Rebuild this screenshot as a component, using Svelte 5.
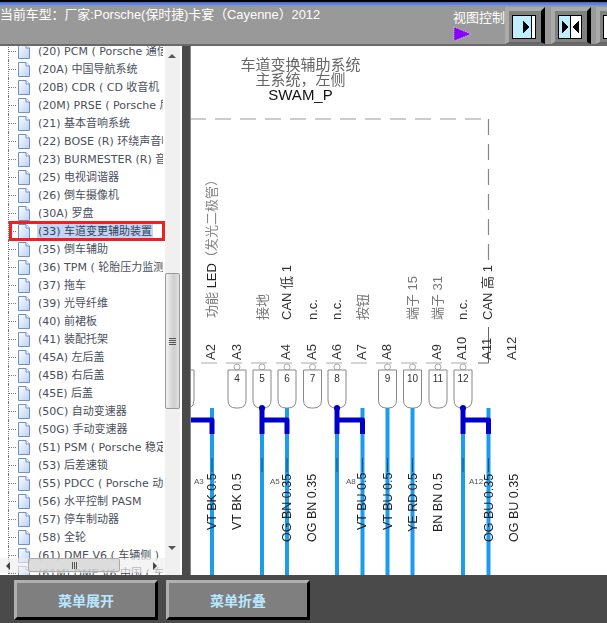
<script>
  const rows = [
    ['(20) PCM ( Porsche 通信管理系统 )'], ['(20A) 中国导航系统'], ['(20B) CDR ( CD 收音机 )'], ['(20M) PRSE ( Porsche 后座娱乐 )'],
    ['(21) 基本音响系统'], ['(22) BOSE (R) 环绕声音响系统'], ['(23) BURMESTER (R) 音响系统'], ['(25) 电视调谐器'],
    ['(26) 倒车摄像机'], ['(30A) 罗盘'], ['(33) 车道变更辅助装置', true], ['(35) 倒车辅助'],
    ['(36) TPM ( 轮胎压力监测 )'], ['(37) 拖车'], ['(39) 光导纤维'], ['(40) 前裙板'], ['(41) 装配托架'],
    ['(45A) 左后盖'], ['(45B) 右后盖'], ['(45E) 后盖'], ['(50C) 自动变速器'], ['(50G) 手动变速器'],
    ['(51) PSM ( Porsche 稳定管理 )'], ['(53) 后差速锁'], ['(55) PDCC ( Porsche 动态底盘 )'], ['(56) 水平控制 PASM'],
    ['(57) 停车制动器'], ['(58) 全轮'], ['(61) DME V6 ( 车辆侧 )'], ['(61M) DME V6 中国 ( 车辆侧 )']
  ];
  const pins = [
    { n: 4, x: 238 }, { n: 5, x: 263 }, { n: 6, x: 288 }, { n: 7, x: 313.5 }, { n: 8, x: 338 },
    { n: 9, x: 388.5 }, { n: 10, x: 413.5 }, { n: 11, x: 439 }, { n: 12, x: 464 }
  ];
  const pinLabels = [
    ['A2', 216], ['A3', 241.5], ['A4', 291], ['A5', 317], ['A6', 342], ['A7', 367],
    ['A8', 392], ['A9', 442], ['A10', 467], ['A11', 492], ['A12', 517]
  ];
  const ticks = [202, 227, 252, 277, 302, 327, 352, 377, 402, 427, 452];
  const wires = [213, 263, 288, 338, 363.5, 388.5, 413.5, 464, 489.5];
  const wireLabels = [
    ['VT BK 0.5', 216.5, 530], ['VT BK 0.5', 242, 530], ['OG BN 0.35', 291.5, 542], ['OG BN 0.35', 317, 542],
    ['VT BU 0.5', 367, 530], ['VT BU 0.5', 393, 530], ['YE RD 0.5', 418, 532], ['BN BN 0.5', 443, 532],
    ['OG BU 0.35', 494, 542], ['OG BU 0.35', 519, 542]
  ];
  const small = [['A3', 195], ['A5', 271], ['A8', 347], ['A12', 470]];
  const funcs = [
    ['接地', 268, true], ['CAN 低 1', 292], ['n.c.', 318], ['n.c.', 342], ['按钮', 368, true],
    ['端子 15', 418, true], ['端子 31', 443, true], ['n.c.', 468], ['CAN 高 1', 493]
  ];
</script>

<div class="page">
  <header class="top">
    <div class="title">当前车型：厂家:Porsche(保时捷)卡宴（Cayenne）2012</div>
    <div class="view">
      <span class="view-label">视图控制</span>
      <svg class="tri" width="20" height="16" viewBox="0 0 20 16">
        <polygon points="1,1 18,8 1,15" fill="#8a00ff" stroke="#fff" stroke-width="0.6" stroke-dasharray="1 1" />
      </svg>
    </div>
    <div class="tools">
      <button class="tool" aria-label="right">
        <svg width="24" height="24" viewBox="0 0 24 24" shape-rendering="crispEdges">
          <rect x="0.5" y="0.5" width="23" height="23" fill="#bfeeff" stroke="#000" />
          <rect x="20" y="1" width="3" height="22" fill="#fff" />
          <rect x="19" y="1" width="1" height="22" fill="#000" />
          <polygon points="11,6 11,18 18,12" fill="#000" />
        </svg>
      </button>
      <button class="tool" aria-label="both">
        <svg width="24" height="24" viewBox="0 0 24 24" shape-rendering="crispEdges">
          <rect x="0.5" y="0.5" width="23" height="23" fill="#fff" stroke="#000" />
          <rect x="1" y="1" width="11" height="22" fill="#bfeeff" />
          <rect x="12" y="1" width="1" height="22" fill="#000" />
          <polygon points="4,6 4,18 11,12" fill="#000" />
          <polygon points="21,6 21,18 14,12" fill="#000" />
        </svg>
      </button>
      <button class="tool" aria-label="left">
        <svg width="24" height="24" viewBox="0 0 24 24" shape-rendering="crispEdges">
          <rect x="0.5" y="0.5" width="23" height="23" fill="#fff" stroke="#000" />
          <rect x="4" y="1" width="1" height="22" fill="#000" />
          <polygon points="13,6 13,18 6,12" fill="#000" />
        </svg>
      </button>
    </div>
  </header>

  <main class="main">
    <section class="tree-panel">
      <div class="tree">
        {#each rows as [label, sel]}
          <div class="row" class:sel>
            <span class="dots"></span>
            <svg class="file" width="12" height="15" viewBox="0 0 12 15">
              <defs>
                <linearGradient id="pg" x1="0" y1="0" x2="1" y2="1">
                  <stop offset="0" stop-color="#fff" />
                  <stop offset="1" stop-color="#b8d0f4" />
                </linearGradient>
              </defs>
              <path d="M0.5 0.5H8L11.5 4V14.5H0.5Z" fill="url(#pg)" stroke="#6f8fc8" />
              <path d="M8 0.5V4H11.5" fill="#fff" stroke="#6f8fc8" />
            </svg>
            <span class="label">{label}</span>
          </div>
        {/each}
      </div>
      <div class="vscroll">
        <span class="up"></span>
        <div class="thumb"><i></i><i></i><i></i><i></i></div>
        <span class="down"></span>
      </div>
      <div class="hscroll">
        <span class="left"></span>
        <div class="hthumb"><i></i><i></i><i></i></div>
        <span class="right"></span>
      </div>
    </section>

    <div class="gutter"></div>

    <section class="diagram">
      <svg width="416" height="529" viewBox="191 46 416 529" font-family="'Liberation Sans','Noto Sans CJK SC',sans-serif">
        <g text-anchor="middle">
          <text x="301.5" y="70" font-size="15" fill="#666">车道变换辅助系统</text>
          <text x="301.5" y="85" font-size="15" fill="#666">主系统，左侧</text>
          <text x="301.5" y="100" font-size="15" fill="#111">SWAM_P</text>
        </g>
        <path d="M191 119H490" stroke="#999" stroke-width="1.2" stroke-dasharray="16 9" fill="none" />
        <path d="M489.5 119V262" stroke="#888" stroke-width="1.2" stroke-dasharray="16 9" fill="none" />
        <path d="M489.5 327V363H479" stroke="#666" fill="none" />

        <text transform="translate(217 318) rotate(-90)" font-size="13" fill="#222"><tspan fill="#777">功能</tspan> LED</text>
        <text transform="translate(217 264) rotate(-90)" font-size="13" fill="#888">（发光二极管）</text>

        {#each funcs as [t, x, gray]}
          <text transform="translate({x} 320) rotate(-90)" font-size="13" fill={gray ? '#777' : '#333'}>{t}</text>
        {/each}

        {#each pinLabels as [t, x]}
          <text transform="translate({x} 360) rotate(-90)" font-size="13" fill="#333">{t}</text>
        {/each}

        {#each ticks as x}
          <path d="M{x} 363h16" stroke="#aaa" fill="none" />
        {/each}

        <path d="M191 370H195V400Q195 406 191 408" fill="#fff" stroke="#888" />
        {#each pins as p}
          <circle cx={p.x} cy="367" r="3" fill="#fff" stroke="#aaa" />
          <path d="M{p.x - 9} 370H{p.x + 9}V400Q{p.x + 9} 408 {p.x + 1} 408H{p.x - 1}Q{p.x - 9} 408 {p.x - 9} 400Z" fill="#fff" stroke="#888" />
          <text x={p.x} y="382" font-size="10" text-anchor="middle" fill="#333">{p.n}</text>
        {/each}

        {#each wires as x}
          <path d="M{x} 408V575" stroke="#1b9cec" stroke-width="4" fill="none" />
          <path d="M{x} 458V472" stroke="#16507c" stroke-width="1" fill="none" />
        {/each}

        <g stroke="#0000c8" stroke-width="5" fill="none" stroke-linejoin="round">
          <path d="M191 420H213V434" />
          <path d="M263 408V434M263 420H288V434" />
          <path d="M338 408V434M338 420H363.5V434" />
          <path d="M464 408V434M464 420H489.5V434" />
        </g>
        <circle cx="263" cy="408" r="3" fill="#0000c8" />
        <circle cx="338" cy="408" r="3" fill="#0000c8" />
        <circle cx="464" cy="408" r="3" fill="#0000c8" />

        {#each wireLabels as [t, x, y]}
          <text transform="translate({x} {y}) rotate(-90)" font-size="12.5" fill="#222">{t}</text>
        {/each}

        {#each small as [t, x]}
          <text x={x} y="484" font-size="8" fill="#555">{t}</text>
        {/each}
      </svg>
    </section>
  </main>

  <footer class="bottom">
    <button class="menu">菜单展开</button>
    <button class="menu">菜单折叠</button>
  </footer>
</div>

<style>
  :global(body) {
    margin: 0;
    background: #fff;
  }
  .page {
    width: 607px;
    height: 623px;
    display: flex;
    flex-direction: column;
    overflow: hidden;
    font-family: "DejaVu Sans", "Noto Sans CJK SC", sans-serif;
  }
  .top {
    height: 46px;
    box-sizing: border-box;
    flex: none;
    display: flex;
    align-items: flex-start;
    background: linear-gradient(#000 0 2px, #4468c4 2px, #7d98de 6px, #999 6px);
    border-bottom: 2px solid #6a6a6a;
    color: #fff;
    position: relative;
  }
  .title {
    padding-top: 7px;
    font-size: 12.9px;
    line-height: 15px;
    white-space: nowrap;
    flex: none;
    width: 453px;
    overflow: hidden;
    font-family: "Liberation Sans", "Noto Sans CJK SC", sans-serif;
  }
  .view {
    width: 52px;
    flex: none;
    display: flex;
    flex-direction: column;
    padding-top: 9px;
  }
  .view-label {
    font-size: 13px;
    line-height: 16px;
    white-space: nowrap;
    font-family: "Noto Sans CJK SC", sans-serif;
  }
  .tri {
    display: block;
    margin-top: 1px;
  }
  .tools {
    display: flex;
    gap: 6px;
    padding-top: 7px;
    flex: none;
  }
  .tool {
    width: 40px;
    height: 37px;
    flex: none;
    box-sizing: border-box;
    padding: 0;
    background: #808080;
    border-style: solid;
    border-width: 4px 4px 2px 4px;
    border-color: #aaa #000 #666 #aaa;
    display: flex;
    align-items: center;
    justify-content: center;
  }
  .tool:last-child {
    margin-left: -1px;
  }
  .tool svg {
    display: block;
    margin: 0 2px 0 0;
  }
  .main {
    flex: 1;
    min-height: 0;
    display: flex;
  }
  .tree-panel {
    width: 182px;
    flex: none;
    display: flex;
    position: relative;
    background: #fff;
    overflow: hidden;
  }
  .tree {
    width: 165px;
    flex: none;
    margin-top: -4px;
    overflow: hidden;
  }
  .row {
    height: 18px;
    display: flex;
    align-items: center;
    position: relative;
    white-space: nowrap;
    font-size: 11px;
    color: #4a4f5c;
  }
  .dots {
    width: 9px;
    height: 18px;
    margin-left: 8px;
    flex: none;
    box-sizing: border-box;
    border-left: 1px dotted #777;
    background: linear-gradient(90deg, #777 50%, transparent 50%) 0 9px / 2px 1px repeat-x;
  }
  .file {
    flex: none;
    margin: 0 7px 0 1px;
    display: block;
  }
  .label {
    padding: 0 1px;
    line-height: 17px;
    max-width: 124px;
    overflow: hidden;
  }
  .sel .label {
    background: #c3d5f2;
    color: #33415c;
  }
  .sel::after {
    content: "";
    position: absolute;
    left: 9px;
    top: -1px;
    width: 150px;
    height: 14px;
    border: 3px solid #ee2020;
  }
  .vscroll {
    width: 15px;
    flex: none;
    background: #f0f0f0;
    position: relative;
    box-sizing: border-box;
    padding-top: 227px;
  }
  .up, .down {
    position: absolute;
    left: 3px;
    border-left: 4px solid transparent;
    border-right: 4px solid transparent;
  }
  .up {
    top: 8px;
    border-bottom: 4px solid #555;
  }
  .down {
    top: 500px;
    border-top: 4px solid #555;
  }
  .thumb {
    height: 136px;
    box-sizing: border-box;
    border: 1px solid #999;
    border-radius: 2px;
    background: linear-gradient(90deg, #f2f2f2, #cfcfcf 60%, #e0e0e0);
    display: flex;
    flex-direction: column;
    align-items: center;
    justify-content: center;
    gap: 1px;
  }
  .thumb i {
    width: 7px;
    height: 1px;
    background: #555;
  }
  .hscroll {
    position: absolute;
    left: 0;
    top: 512px;
    width: 165px;
    height: 15px;
    background: rgba(238, 238, 238, 0.65);
  }
  .left, .right {
    position: absolute;
    top: 4px;
    border-top: 4px solid transparent;
    border-bottom: 4px solid transparent;
  }
  .left {
    left: 6px;
    border-right: 4px solid #444;
  }
  .right {
    left: 153px;
    border-left: 4px solid #444;
  }
  .hthumb {
    position: absolute;
    left: 28px;
    top: 0;
    width: 92px;
    height: 14px;
    box-sizing: border-box;
    border: 1px solid #aaa;
    border-radius: 2px;
    background: rgba(200, 200, 200, 0.55);
    display: flex;
    justify-content: center;
    align-items: center;
    gap: 1px;
  }
  .hthumb i {
    width: 1px;
    height: 7px;
    background: #555;
  }
  .gutter {
    width: 8px;
    flex: none;
    background: #4a4a4a;
  }
  .diagram {
    flex: 1;
    min-width: 0;
    overflow: hidden;
    border-left: 1px solid #888;
    position: relative;
  }
  .diagram svg {
    display: block;
    margin-left: -1px;
    filter: blur(0.35px);
  }
  .bottom {
    height: 48px;
    flex: none;
    box-sizing: border-box;
    background: #4a4a4a;
    display: flex;
    gap: 8px;
    padding: 5px 0 0 14px;
  }
  .menu {
    width: 144px;
    height: 40px;
    box-sizing: border-box;
    padding: 0;
    background: #7f7f7f;
    border-style: solid;
    border-width: 3px;
    border-color: #b0b0b0 #000 #000 #b0b0b0;
    color: #b8e8ff;
    font-family: "Noto Sans CJK SC", sans-serif;
    font-weight: 700;
    font-size: 14px;
  }
</style>
